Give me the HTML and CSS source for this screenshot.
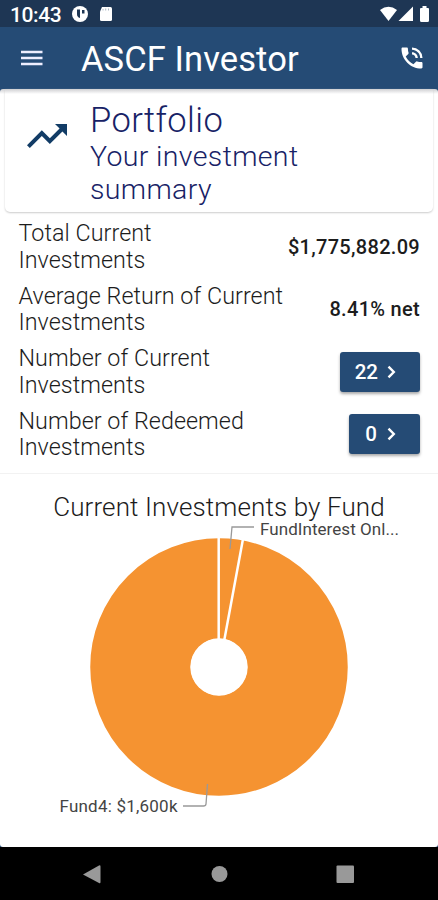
FILE: index.html
```html
<!DOCTYPE html>
<html lang="en">
    <head>
        <meta charset="UTF-8" />
        <meta name="viewport" content="width=device-width, initial-scale=1.0" />
        <title>ASCF Investor</title>
        <link rel="stylesheet" href="styles.css">
    </head>
    <body>
        <div class="status-bar">
            <span class="time">10:43</span>
            <svg class="status-left" width="44" height="18" viewBox="0 0 44 18">
                <circle cx="9" cy="9" r="8" fill="#fff" />
                <path d="M6 4.500h3v8.500a4 4 0 0 1-3-4zM11 5h2.500v3.500H11z" fill="#1e3654" />
                <path d="M31 2h8.500q1.500 0 1.500 1.500v11q0 1.500-1.500 1.500h-9q-1.500 0-1.500-1.500V6.500z" fill="#fff" />
                <path d="M32 4v1.500M34.700 3.500v2M37.500 3.500v2" stroke="#9aa8b8" stroke-width=".8" />
            </svg>
            <svg class="status-right" width="54" height="18" viewBox="0 0 54 18">
                <path d="M1 5Q9.500-1.500 18 5L9.500 16z" fill="#fff" />
                <path d="M34 1.500V16H19.500z" fill="#fff" />
                <path d="M43.500 1h4v2h1.500q1 0 1 1v11.500q0 1.500-1.500 1.500h-6q-1.500 0-1.500-1.500V4q0-1 1-1h1.500z" fill="#fff" />
            </svg>
        </div>

        <header class="toolbar">
            <svg class="menu" width="22" height="16" viewBox="0 0 22 16">
                <path d="M0 2h21.500M0 8h21.500M0 14h21.500" stroke="#eef" stroke-width="2.300" />
            </svg>
            <h1>ASCF Investor</h1>
            <svg class="phone" width="28" height="28" viewBox="0 0 24 24" fill="#fff">
                <path d="M20 15.500c-1.250 0-2.450-.2-3.570-.57a1.020 1.020 0 0 0-1.020.24l-2.200 2.200a15.050 15.050 0 0 1-6.590-6.590l2.200-2.210c.28-.26.360-.65.250-1C8.700 6.450 8.500 5.250 8.500 4c0-.55-.45-1-1-1H4c-.55 0-1 .45-1 1 0 9.390 7.610 17 17 17 .55 0 1-.45 1-1v-3.500c0-.55-.45-1-1-1zM19 12h2a9 9 0 0 0-9-9v2c3.870 0 7 3.130 7 7zm-4 0h2c0-2.760-2.240-5-5-5v2c1.660 0 3 1.340 3 3z" />
            </svg>
        </header>

        <main>
            <section class="card">
                <svg class="trend" width="48" height="48" viewBox="0 0 24 24" fill="#123c66">
                    <path d="M16 6l2.290 2.290-4.880 4.880-4-4L2 16.590 3.410 18l6-6 4 4 6.300-6.290L22 12V6z" />
                </svg>
                <div>
                    <h2>Portfolio</h2>
                    <p>Your investment<br>summary</p>
                </div>
            </section>

            <section class="summary">
                <div class="row">
                    <span class="label">Total Current<br>Investments</span>
                    <strong>$1,775,882.09</strong>
                </div>
                <div class="row">
                    <span class="label">Average Return of Current<br>Investments</span>
                    <strong>8.41% net</strong>
                </div>
                <div class="row">
                    <span class="label">Number of Current<br>Investments</span>
                    <button>
                        22
                        <svg width="9" height="14" viewBox="0 0 9 14"><path d="M1.500 1.700L6.800 7l-5.300 5.300" /></svg>
                    </button>
                </div>
                <div class="row">
                    <span class="label">Number of Redeemed<br>Investments</span>
                    <button>
                        0
                        <svg width="9" height="14" viewBox="0 0 9 14"><path d="M1.500 1.700L6.800 7l-5.300 5.300" /></svg>
                    </button>
                </div>
            </section>

            <section class="fund">
                <h3>Current Investments by Fund</h3>
                <svg class="chart" width="438" height="326" viewBox="0 521 438 326">
                    <circle cx="219" cy="667" r="78.500" fill="none" stroke="#f59331" stroke-width="100.500" />
                    <path class="split" d="M218.700 537v102M243 539l-18.700 101" />
                    <circle cx="219" cy="667" r="28.700" fill="#fff" />
                    <path class="leader" d="M230 549l2-22h22" />
                    <path class="leader" d="M207.500 784l-1.500 20q-.2 2-2.500 2h-20.500" />
                    <text x="260" y="535" textLength="139">FundInterest Onl...</text>
                    <text x="59.500" y="812" textLength="118">Fund4: $1,600k</text>
                </svg>
            </section>
        </main>

        <nav class="nav-bar">
            <svg width="438" height="53" viewBox="0 0 438 53" fill="#999">
                <path d="M83 27.500L99 18.500q1.500-.7 1.500 1v15.500q0 1.700-1.500 1z" />
                <circle cx="219.500" cy="27" r="8" />
                <rect x="336.500" y="18.500" width="17.500" height="17.500" rx="1" />
            </svg>
        </nav>
    </body>
</html>
```
FILE: styles.css
```css
* {
    margin: 0;
    padding: 0;
    box-sizing: border-box;
}
body {
    width: 438px;
    height: 900px;
    overflow: hidden;
    display: flex;
    flex-direction: column;
    font-family: Roboto, sans-serif;
    background: #254b75;
    color: #1c1c1c;
}
.status-bar {
    height: 27px;
    padding: 0 5px 0 10px;
    display: flex;
    align-items: center;
    background: #1e3654;
    color: #fff;
}
.time {
    width: 61px;
    font-size: 21px;
    font-weight: 500;
    line-height: 27px;
    padding-top: 3px;
    letter-spacing: -0.4px;
}
.status-left {
    margin-top: 1px;
}
.status-right {
    margin-left: auto;
}
.toolbar {
    height: 62px;
    padding: 0 12px 0 21px;
    display: flex;
    align-items: center;
    color: #fff;
}
.toolbar h1 {
    margin-left: 38px;
    padding-top: 2px;
    font-size: 34.5px;
    font-weight: 400;
    line-height: 60px;
    letter-spacing: 0.1px;
}
.phone {
    margin-left: auto;
}
main {
    height: 758px;
    background: linear-gradient(#cfcfd2, #fff 5px);
    border-radius: 3px;
}
.card {
    height: 123px;
    margin: 0 5px;
    padding: 12px 0 0 18px;
    display: flex;
    color: #172266;
    border-radius: 0 0 5px 5px;
    box-shadow: 0 1px 2px #ccc;
}
.trend {
    margin: 11px 19px 0 0;
}
.card h2 {
    font-size: 34.5px;
    font-weight: 300;
    line-height: 38px;
    letter-spacing: 0.4px;
}
.card p {
    padding-top: 1px;
    font-size: 28.5px;
    font-weight: 300;
    line-height: 33px;
    letter-spacing: 0.35px;
}
.summary {
    height: 262px;
    padding: 3.5px 18px 0 18.5px;
    border-bottom: 1px solid #f2f2f2;
}
.row {
    height: 62.5px;
    display: flex;
    align-items: center;
    justify-content: space-between;
}
.label {
    font-size: 23.3px;
    font-weight: 300;
    line-height: 26.5px;
    letter-spacing: 0.05px;
    white-space: nowrap;
}
.row strong {
    font-size: 20px;
    font-weight: 500;
    letter-spacing: 0.3px;
}
.row button {
    height: 40px;
    padding: 0 24px 0 15px;
    display: flex;
    align-items: center;
    gap: 9px;
    border: 0;
    border-radius: 3px;
    background: #254b75;
    box-shadow: 0 2px 3px #aaa;
    color: #fff;
    font: 500 20.5px Roboto, sans-serif;
}
.row:last-child button {
    padding-left: 16px;
    gap: 10px;
}
.row button path {
    fill: none;
    stroke: #fff;
    stroke-width: 2.4;
}
.fund h3 {
    height: 47px;
    padding-top: 19px;
    text-align: center;
    font-size: 26px;
    font-weight: 300;
    line-height: 28px;
    letter-spacing: 0.12px;
}
.chart {
    display: block;
    overflow: visible;
    font-size: 17px;
}
.split {
    fill: none;
    stroke: #fff;
    stroke-width: 2.5;
}
.leader {
    fill: none;
    stroke: #999;
    stroke-width: 1.3;
}
.chart text {
    fill: #444;
}
.nav-bar {
    height: 53px;
    background: #000;
}
.nav-bar svg {
    display: block;
}
```
